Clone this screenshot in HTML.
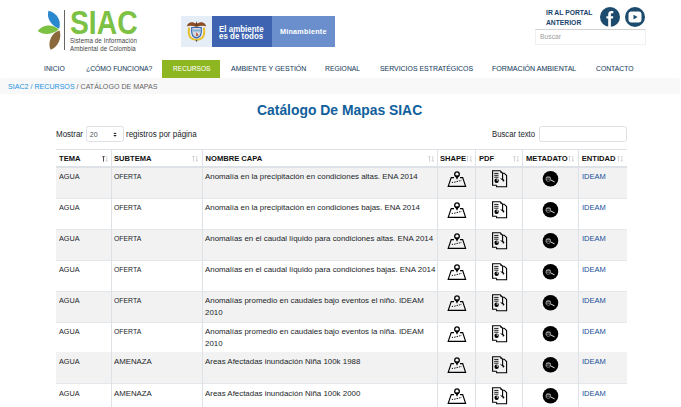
<!DOCTYPE html>
<html><head><meta charset="utf-8">
<style>
*{margin:0;padding:0;box-sizing:border-box}
html,body{width:681px;height:407px;overflow:hidden;background:#fff;font-family:"Liberation Sans",sans-serif}
.a{position:absolute;white-space:nowrap}
/* header */
.siac{left:70px;top:5px;font-size:32.5px;line-height:36px;font-weight:bold;color:#7cc143;transform:scaleX(0.87);transform-origin:0 0}
.sub{left:70px;font-size:6.5px;letter-spacing:0.12px;color:#3f3f3f;transform:scaleX(0.945);transform-origin:0 0}
.vline{left:64px;top:10px;width:1px;height:40px;background:#666}
.gov1{left:181px;top:16px;width:31px;height:31px;background:#e5edf7}
.gov2{left:212px;top:16px;width:60px;height:31px;background:#3e63b0}
.gov3{left:272px;top:16px;width:63px;height:31px;background:#6b8fcc}
.govt{color:#fff;font-weight:bold}
.portal{left:546px;font-size:6.75px;font-weight:bold;color:#17426a}
.sbox{left:535px;top:29px;width:111px;height:15.5px;border:1px solid #f0f0f0;border-top:1px solid #d2d2d2;background:#fff}
/* nav */
.nav{top:63.9px;font-size:7.75px;color:#183e60;-webkit-text-stroke:0.06px #183e60;transform:scaleX(0.876);transform-origin:0 0}
.navact{left:162px;top:60px;width:58px;height:18px;background:#8db621}
.crumb{left:0;top:78px;width:680px;height:16px;background:#f8f8f8;border-radius:2px}
.ctext{left:8px;top:83px;font-size:7.1px;color:#666}
.ctext b{font-weight:normal;color:#1e93e0}
/* title */
.title{left:257px;top:102px;font-size:13.9px;font-weight:bold;color:#11609c}
.lbl{font-size:7.9px;color:#212529}
.sel{left:86px;top:126px;width:38px;height:16px;border:1px solid #dde1e6;border-radius:2.5px;background:#fff}
.inp{left:539px;top:126px;width:88px;height:16px;border:1px solid #dde1e6;border-radius:2.5px;background:#fff}
/* table */
.tb{position:absolute;left:56px;top:149px;width:571px}
.hdr{position:absolute;left:0;top:0;width:571px;height:19px;border-top:1px solid #dee2e6;border-bottom:2px solid #dee2e6}
.row{position:absolute;left:0;width:571px;height:31px;border-bottom:1px solid #e3e6ea}
.g{background:#f2f2f2}
.vl{position:absolute;top:0;width:1px;background:#dee2e6}
.th{position:absolute;top:5.4px;font-size:7.6px;font-weight:bold;color:#111}
.td{position:absolute;top:6px;font-size:7.9px;color:#212529;line-height:11.5px}
.ent{color:#174f99}
.ic{position:absolute}
</style></head><body>

<!-- logo -->
<svg class="a" style="left:0;top:0" width="70" height="56" viewBox="0 0 70 56">
  <path d="M48.5 10.8 C46 19, 52 26, 59.2 28.8 C61.5 21, 57.5 13, 48.5 10.8Z" fill="#2a88cf"/>
  <path d="M37.8 31 C42 25, 52 23, 58.8 29.6 C52 35, 43 35.5, 37.8 31Z" fill="#7cc142"/>
  <path d="M59.6 30.4 C52 32, 47 42, 50.6 49.8 C58 47, 62 38, 59.6 30.4Z" fill="#8a6a3c"/>
</svg>
<div class="a vline"></div>
<div class="a siac">SIAC</div>
<div class="a sub" style="top:36.6px">Sistema de Información</div>
<div class="a sub" style="top:45.2px">Ambiental de Colombia</div>

<div class="a gov1"></div>
<svg class="a" style="left:181px;top:16px" width="31" height="31" viewBox="0 0 31 31">
  <path d="M5.8 10.2 C7 6 11 5 15.5 7.8 C20 5 24 6 25.2 10.2 C22.5 9.2 19 9.6 15.5 11 C12 9.6 8.5 9.2 5.8 10.2Z" fill="#8c4d26"/>
  <path d="M15.5 5 L16.6 9.5 L14.4 9.5Z" fill="#5a3a2a"/>
  <path d="M8.2 11.5 C7.3 16 8 20 10 22 C12 23.5 14 23.5 15.5 24.2 C17 23.5 19 23.5 21 22 C23 20 23.7 16 22.8 11.5" fill="none" stroke="#e6bf2a" stroke-width="2"/>
  <path d="M10.8 11.5 C10.4 15.5 10.8 19 12.5 20.5 C13.8 21.5 15 21.6 15.5 22 C16 21.6 17.2 21.5 18.5 20.5 C20.2 19 20.6 15.5 20.2 11.5 Z" fill="#d6d9e2" stroke="#3566ae" stroke-width="1.2"/>
  <path d="M11.5 13.5 H19.5 V15.5 H11.5Z" fill="#7fb0d8"/>
  <path d="M15.5 16 L17.5 19.5 L15 20Z" fill="#b8482a"/>
  <path d="M14.6 24 L16.4 24 L15.5 26.2Z" fill="#3a4a7a"/>
</svg>
<div class="a gov2"></div>
<div class="a gov3"></div>
<div class="a govt" style="left:219px;top:25.9px;font-size:8.6px;line-height:7.5px;transform:scaleX(0.925);transform-origin:0 0">El ambiente<br>es de todos</div>
<div class="a govt" style="left:280px;top:27.4px;font-size:7.2px;letter-spacing:0.25px">Minambiente</div>

<div class="a portal" style="top:9px">IR AL PORTAL</div>
<div class="a portal" style="top:19.2px">ANTERIOR</div>
<svg class="a" style="left:599px;top:6px" width="48" height="22" viewBox="0 0 48 22">
  <circle cx="11" cy="11" r="10" fill="#1c4b6d"/>
  <path d="M9.2 21 V12.6 H7.4 V10.2 H9.2 V8.4 C9.2 6 10.4 4.9 12.6 4.9 C13.3 4.9 14 5 14.3 5.1 V7.3 H13.2 C12.2 7.3 11.9 7.7 11.9 8.5 V10.2 H14.3 L14 12.6 H11.9 V21 Z" fill="#fff"/>
  <circle cx="36" cy="11" r="10" fill="#1c4b6d"/>
  <rect x="29.5" y="5.6" width="13" height="11" rx="3" fill="#fff"/>
  <path d="M34.5 8.8 L38.6 11.1 L34.5 13.4Z" fill="#1c4b6d"/>
</svg>
<div class="a sbox"></div>
<div class="a" style="left:540px;top:33px;font-size:6.75px;color:#a0a0a0">Buscar</div>

<!-- nav -->
<div class="a navact"></div>
<div class="a nav" style="left:44px">INICIO</div>
<div class="a nav" style="left:86px">¿CÓMO FUNCIONA?</div>
<div class="a nav" style="left:172.6px;transform:scaleX(0.852);color:#fff;-webkit-text-stroke:0.06px #fff">RECURSOS</div>
<div class="a nav" style="left:231px;transform:scaleX(0.9)">AMBIENTE Y GESTIÓN</div>
<div class="a nav" style="left:325px">REGIONAL</div>
<div class="a nav" style="left:380px;transform:scaleX(0.892)">SERVICIOS ESTRATÉGICOS</div>
<div class="a nav" style="left:492px;transform:scaleX(0.912)">FORMACIÓN AMBIENTAL</div>
<div class="a nav" style="left:596px">CONTACTO</div>

<div class="a crumb"></div>
<div class="a ctext"><b>SIAC2 / RECURSOS</b> / CATÁLOGO DE MAPAS</div>

<div class="a title">Catálogo De Mapas SIAC</div>
<div class="a lbl" style="left:56px;top:128.8px;font-size:8.3px;transform:scaleX(0.96);transform-origin:0 0">Mostrar</div>
<div class="a sel"></div>
<div class="a lbl" style="left:89.8px;top:130.6px;font-size:7px;color:#495057">20</div>
<svg class="a" style="left:112px;top:131px" width="6" height="7" viewBox="0 0 6 7"><path d="M1.2 3.1 L3 1.4 L4.8 3.1Z M1.2 4.1 L3 5.8 L4.8 4.1Z" fill="#222"/></svg>
<div class="a lbl" style="left:126px;top:128.8px;font-size:8.3px;transform:scaleX(0.965);transform-origin:0 0">registros por página</div>
<div class="a lbl" style="left:492px;top:128.8px;font-size:8.3px;transform:scaleX(0.933);transform-origin:0 0">Buscar texto</div>
<div class="a inp"></div>

<div class="tb">
<div class="hdr"></div>
<div class="th" style="left:3px">TEMA</div>
<div class="th" style="left:58px">SUBTEMA</div>
<div class="th" style="left:149.5px">NOMBRE CAPA</div>
<div class="th" style="left:384px">SHAPE</div>
<div class="th" style="left:423px">PDF</div>
<div class="th" style="left:470px">METADATO</div>
<div class="th" style="left:525.8px">ENTIDAD</div>
<svg class="ic" style="left:45.5px;top:7px" width="7" height="7" viewBox="0 0 7 7"><path d="M1.5 0.2 V5.6 M0.3 0.6 H2.7" stroke="#5a4a5a" stroke-width="1"/><path d="M4.8 0 V5.2 M3.6 4.9 H6" stroke="#d4d4d4" stroke-width="1"/></svg>
<svg class="ic" style="left:136.2px;top:7px" width="7" height="7" viewBox="0 0 7 7"><path d="M1.5 0.2 V5.6 M0.3 0.6 H2.7" stroke="#d4d4d4" stroke-width="1"/><path d="M4.8 0 V5.2 M3.6 4.9 H6" stroke="#d4d4d4" stroke-width="1"/></svg>
<svg class="ic" style="left:371.6px;top:7px" width="7" height="7" viewBox="0 0 7 7"><path d="M1.5 0.2 V5.6 M0.3 0.6 H2.7" stroke="#d4d4d4" stroke-width="1"/><path d="M4.8 0 V5.2 M3.6 4.9 H6" stroke="#d4d4d4" stroke-width="1"/></svg>
<svg class="ic" style="left:410.4px;top:7px" width="7" height="7" viewBox="0 0 7 7"><path d="M1.5 0.2 V5.6 M0.3 0.6 H2.7" stroke="#d4d4d4" stroke-width="1"/><path d="M4.8 0 V5.2 M3.6 4.9 H6" stroke="#d4d4d4" stroke-width="1"/></svg>
<svg class="ic" style="left:456.7px;top:7px" width="7" height="7" viewBox="0 0 7 7"><path d="M1.5 0.2 V5.6 M0.3 0.6 H2.7" stroke="#d4d4d4" stroke-width="1"/><path d="M4.8 0 V5.2 M3.6 4.9 H6" stroke="#d4d4d4" stroke-width="1"/></svg>
<svg class="ic" style="left:512.4px;top:7px" width="7" height="7" viewBox="0 0 7 7"><path d="M1.5 0.2 V5.6 M0.3 0.6 H2.7" stroke="#d4d4d4" stroke-width="1"/><path d="M4.8 0 V5.2 M3.6 4.9 H6" stroke="#d4d4d4" stroke-width="1"/></svg>
<svg class="ic" style="left:560.5px;top:7px" width="7" height="7" viewBox="0 0 7 7"><path d="M1.5 0.2 V5.6 M0.3 0.6 H2.7" stroke="#d4d4d4" stroke-width="1"/><path d="M4.8 0 V5.2 M3.6 4.9 H6" stroke="#d4d4d4" stroke-width="1"/></svg>
<div class="row g" style="top:19px"></div>
<div class="td" style="left:3px;top:22px;transform:scaleX(0.92);transform-origin:0 0">AGUA</div>
<div class="td" style="left:58px;top:22px;transform:scaleX(0.87);transform-origin:0 0">OFERTA</div>
<div class="td" style="left:149px;top:22px">Anomalía en la precipitación en condiciones altas. ENA 2014</div>
<div class="td ent" style="left:525.5px;top:22px;transform:scaleX(0.95);transform-origin:0 0">IDEAM</div>
<svg class="ic" style="left:390px;top:20px" width="22" height="20" viewBox="0 0 22 20"><path d="M8 8.6 H5.2 L2.2 17.3 H19.6 L16.7 8.6 H14" fill="none" stroke="#000" stroke-width="1.15" stroke-linejoin="miter"/><circle cx="11" cy="5.2" r="2.3" fill="none" stroke="#000" stroke-width="1.3"/><path d="M8.9 6.4 L11 10.7 L13.1 6.4Z" fill="#000"/><circle cx="6.4" cy="13.3" r="0.65" fill="#000"/><path d="M8.1 13.3 L15.7 11.3" stroke="#000" stroke-width="0.9" stroke-dasharray="1.6 0.9"/></svg>
<svg class="ic" style="left:432px;top:19px" width="22" height="22" viewBox="0 0 22 22"><path d="M8.6 17.3 V18.8 H18.6 V7.6 L16.2 5.2 H14.6" fill="none" stroke="#000" stroke-width="1.1"/><path d="M14.6 12.2 V5.2 L12.2 2.7 H4.6 V17.3 H8.6" fill="none" stroke="#000" stroke-width="1.1"/><path d="M12.2 2.7 L14.6 5.2 L12.6 5.0Z" fill="#000"/><path d="M6.2 5.4 H10.5 M6.2 7.3 H10.5 M6.2 9.2 H10.5" stroke="#000" stroke-width="0.9"/><circle cx="8.6" cy="12.7" r="2.2" fill="#000"/><circle cx="9.3" cy="12" r="0.8" fill="#fff"/><path d="M12.6 10.6 L15.6 12.2" stroke="#000" stroke-width="1"/><path d="M15 11 L16.6 12.6 L14.8 14Z" fill="#000"/></svg>
<svg class="ic" style="left:484px;top:19px" width="22" height="22" viewBox="0 0 22 22"><circle cx="10.5" cy="10.7" r="7.8" fill="#000"/><circle cx="8.3" cy="11" r="2.4" fill="none" stroke="#999" stroke-width="0.8"/><path d="M6 9.4 H10.6 M5.9 11.1 H10.8" stroke="#bbb" stroke-width="0.7"/><path d="M10.8 12 L14.6 13.9" stroke="#ddd" stroke-width="1"/></svg>
<div class="row" style="top:50px"></div>
<div class="td" style="left:3px;top:53px;transform:scaleX(0.92);transform-origin:0 0">AGUA</div>
<div class="td" style="left:58px;top:53px;transform:scaleX(0.87);transform-origin:0 0">OFERTA</div>
<div class="td" style="left:149px;top:53px">Anomalía en la precipitación en condiciones bajas. ENA 2014</div>
<div class="td ent" style="left:525.5px;top:53px;transform:scaleX(0.95);transform-origin:0 0">IDEAM</div>
<svg class="ic" style="left:390px;top:51px" width="22" height="20" viewBox="0 0 22 20"><path d="M8 8.6 H5.2 L2.2 17.3 H19.6 L16.7 8.6 H14" fill="none" stroke="#000" stroke-width="1.15" stroke-linejoin="miter"/><circle cx="11" cy="5.2" r="2.3" fill="none" stroke="#000" stroke-width="1.3"/><path d="M8.9 6.4 L11 10.7 L13.1 6.4Z" fill="#000"/><circle cx="6.4" cy="13.3" r="0.65" fill="#000"/><path d="M8.1 13.3 L15.7 11.3" stroke="#000" stroke-width="0.9" stroke-dasharray="1.6 0.9"/></svg>
<svg class="ic" style="left:432px;top:50px" width="22" height="22" viewBox="0 0 22 22"><path d="M8.6 17.3 V18.8 H18.6 V7.6 L16.2 5.2 H14.6" fill="none" stroke="#000" stroke-width="1.1"/><path d="M14.6 12.2 V5.2 L12.2 2.7 H4.6 V17.3 H8.6" fill="none" stroke="#000" stroke-width="1.1"/><path d="M12.2 2.7 L14.6 5.2 L12.6 5.0Z" fill="#000"/><path d="M6.2 5.4 H10.5 M6.2 7.3 H10.5 M6.2 9.2 H10.5" stroke="#000" stroke-width="0.9"/><circle cx="8.6" cy="12.7" r="2.2" fill="#000"/><circle cx="9.3" cy="12" r="0.8" fill="#fff"/><path d="M12.6 10.6 L15.6 12.2" stroke="#000" stroke-width="1"/><path d="M15 11 L16.6 12.6 L14.8 14Z" fill="#000"/></svg>
<svg class="ic" style="left:484px;top:50px" width="22" height="22" viewBox="0 0 22 22"><circle cx="10.5" cy="10.7" r="7.8" fill="#000"/><circle cx="8.3" cy="11" r="2.4" fill="none" stroke="#999" stroke-width="0.8"/><path d="M6 9.4 H10.6 M5.9 11.1 H10.8" stroke="#bbb" stroke-width="0.7"/><path d="M10.8 12 L14.6 13.9" stroke="#ddd" stroke-width="1"/></svg>
<div class="row g" style="top:81px"></div>
<div class="td" style="left:3px;top:84px;transform:scaleX(0.92);transform-origin:0 0">AGUA</div>
<div class="td" style="left:58px;top:84px;transform:scaleX(0.87);transform-origin:0 0">OFERTA</div>
<div class="td" style="left:149px;top:84px">Anomalías en el caudal líquido para condiciones altas. ENA 2014</div>
<div class="td ent" style="left:525.5px;top:84px;transform:scaleX(0.95);transform-origin:0 0">IDEAM</div>
<svg class="ic" style="left:390px;top:82px" width="22" height="20" viewBox="0 0 22 20"><path d="M8 8.6 H5.2 L2.2 17.3 H19.6 L16.7 8.6 H14" fill="none" stroke="#000" stroke-width="1.15" stroke-linejoin="miter"/><circle cx="11" cy="5.2" r="2.3" fill="none" stroke="#000" stroke-width="1.3"/><path d="M8.9 6.4 L11 10.7 L13.1 6.4Z" fill="#000"/><circle cx="6.4" cy="13.3" r="0.65" fill="#000"/><path d="M8.1 13.3 L15.7 11.3" stroke="#000" stroke-width="0.9" stroke-dasharray="1.6 0.9"/></svg>
<svg class="ic" style="left:432px;top:81px" width="22" height="22" viewBox="0 0 22 22"><path d="M8.6 17.3 V18.8 H18.6 V7.6 L16.2 5.2 H14.6" fill="none" stroke="#000" stroke-width="1.1"/><path d="M14.6 12.2 V5.2 L12.2 2.7 H4.6 V17.3 H8.6" fill="none" stroke="#000" stroke-width="1.1"/><path d="M12.2 2.7 L14.6 5.2 L12.6 5.0Z" fill="#000"/><path d="M6.2 5.4 H10.5 M6.2 7.3 H10.5 M6.2 9.2 H10.5" stroke="#000" stroke-width="0.9"/><circle cx="8.6" cy="12.7" r="2.2" fill="#000"/><circle cx="9.3" cy="12" r="0.8" fill="#fff"/><path d="M12.6 10.6 L15.6 12.2" stroke="#000" stroke-width="1"/><path d="M15 11 L16.6 12.6 L14.8 14Z" fill="#000"/></svg>
<svg class="ic" style="left:484px;top:81px" width="22" height="22" viewBox="0 0 22 22"><circle cx="10.5" cy="10.7" r="7.8" fill="#000"/><circle cx="8.3" cy="11" r="2.4" fill="none" stroke="#999" stroke-width="0.8"/><path d="M6 9.4 H10.6 M5.9 11.1 H10.8" stroke="#bbb" stroke-width="0.7"/><path d="M10.8 12 L14.6 13.9" stroke="#ddd" stroke-width="1"/></svg>
<div class="row" style="top:112px"></div>
<div class="td" style="left:3px;top:115px;transform:scaleX(0.92);transform-origin:0 0">AGUA</div>
<div class="td" style="left:58px;top:115px;transform:scaleX(0.87);transform-origin:0 0">OFERTA</div>
<div class="td" style="left:149px;top:115px">Anomalías en el caudal líquido para condiciones bajas. ENA 2014</div>
<div class="td ent" style="left:525.5px;top:115px;transform:scaleX(0.95);transform-origin:0 0">IDEAM</div>
<svg class="ic" style="left:390px;top:113px" width="22" height="20" viewBox="0 0 22 20"><path d="M8 8.6 H5.2 L2.2 17.3 H19.6 L16.7 8.6 H14" fill="none" stroke="#000" stroke-width="1.15" stroke-linejoin="miter"/><circle cx="11" cy="5.2" r="2.3" fill="none" stroke="#000" stroke-width="1.3"/><path d="M8.9 6.4 L11 10.7 L13.1 6.4Z" fill="#000"/><circle cx="6.4" cy="13.3" r="0.65" fill="#000"/><path d="M8.1 13.3 L15.7 11.3" stroke="#000" stroke-width="0.9" stroke-dasharray="1.6 0.9"/></svg>
<svg class="ic" style="left:432px;top:112px" width="22" height="22" viewBox="0 0 22 22"><path d="M8.6 17.3 V18.8 H18.6 V7.6 L16.2 5.2 H14.6" fill="none" stroke="#000" stroke-width="1.1"/><path d="M14.6 12.2 V5.2 L12.2 2.7 H4.6 V17.3 H8.6" fill="none" stroke="#000" stroke-width="1.1"/><path d="M12.2 2.7 L14.6 5.2 L12.6 5.0Z" fill="#000"/><path d="M6.2 5.4 H10.5 M6.2 7.3 H10.5 M6.2 9.2 H10.5" stroke="#000" stroke-width="0.9"/><circle cx="8.6" cy="12.7" r="2.2" fill="#000"/><circle cx="9.3" cy="12" r="0.8" fill="#fff"/><path d="M12.6 10.6 L15.6 12.2" stroke="#000" stroke-width="1"/><path d="M15 11 L16.6 12.6 L14.8 14Z" fill="#000"/></svg>
<svg class="ic" style="left:484px;top:112px" width="22" height="22" viewBox="0 0 22 22"><circle cx="10.5" cy="10.7" r="7.8" fill="#000"/><circle cx="8.3" cy="11" r="2.4" fill="none" stroke="#999" stroke-width="0.8"/><path d="M6 9.4 H10.6 M5.9 11.1 H10.8" stroke="#bbb" stroke-width="0.7"/><path d="M10.8 12 L14.6 13.9" stroke="#ddd" stroke-width="1"/></svg>
<div class="row g" style="top:143px"></div>
<div class="td" style="left:3px;top:146px;transform:scaleX(0.92);transform-origin:0 0">AGUA</div>
<div class="td" style="left:58px;top:146px;transform:scaleX(0.87);transform-origin:0 0">OFERTA</div>
<div class="td" style="left:149px;top:146px">Anomalías promedio en caudales bajo eventos el niño. IDEAM<br>2010</div>
<div class="td ent" style="left:525.5px;top:146px;transform:scaleX(0.95);transform-origin:0 0">IDEAM</div>
<svg class="ic" style="left:390px;top:144px" width="22" height="20" viewBox="0 0 22 20"><path d="M8 8.6 H5.2 L2.2 17.3 H19.6 L16.7 8.6 H14" fill="none" stroke="#000" stroke-width="1.15" stroke-linejoin="miter"/><circle cx="11" cy="5.2" r="2.3" fill="none" stroke="#000" stroke-width="1.3"/><path d="M8.9 6.4 L11 10.7 L13.1 6.4Z" fill="#000"/><circle cx="6.4" cy="13.3" r="0.65" fill="#000"/><path d="M8.1 13.3 L15.7 11.3" stroke="#000" stroke-width="0.9" stroke-dasharray="1.6 0.9"/></svg>
<svg class="ic" style="left:432px;top:143px" width="22" height="22" viewBox="0 0 22 22"><path d="M8.6 17.3 V18.8 H18.6 V7.6 L16.2 5.2 H14.6" fill="none" stroke="#000" stroke-width="1.1"/><path d="M14.6 12.2 V5.2 L12.2 2.7 H4.6 V17.3 H8.6" fill="none" stroke="#000" stroke-width="1.1"/><path d="M12.2 2.7 L14.6 5.2 L12.6 5.0Z" fill="#000"/><path d="M6.2 5.4 H10.5 M6.2 7.3 H10.5 M6.2 9.2 H10.5" stroke="#000" stroke-width="0.9"/><circle cx="8.6" cy="12.7" r="2.2" fill="#000"/><circle cx="9.3" cy="12" r="0.8" fill="#fff"/><path d="M12.6 10.6 L15.6 12.2" stroke="#000" stroke-width="1"/><path d="M15 11 L16.6 12.6 L14.8 14Z" fill="#000"/></svg>
<svg class="ic" style="left:484px;top:143px" width="22" height="22" viewBox="0 0 22 22"><circle cx="10.5" cy="10.7" r="7.8" fill="#000"/><circle cx="8.3" cy="11" r="2.4" fill="none" stroke="#999" stroke-width="0.8"/><path d="M6 9.4 H10.6 M5.9 11.1 H10.8" stroke="#bbb" stroke-width="0.7"/><path d="M10.8 12 L14.6 13.9" stroke="#ddd" stroke-width="1"/></svg>
<div class="row" style="top:174px"></div>
<div class="td" style="left:3px;top:177px;transform:scaleX(0.92);transform-origin:0 0">AGUA</div>
<div class="td" style="left:58px;top:177px;transform:scaleX(0.87);transform-origin:0 0">OFERTA</div>
<div class="td" style="left:149px;top:177px">Anomalías promedio en caudales bajo eventos la niña. IDEAM<br>2010</div>
<div class="td ent" style="left:525.5px;top:177px;transform:scaleX(0.95);transform-origin:0 0">IDEAM</div>
<svg class="ic" style="left:390px;top:175px" width="22" height="20" viewBox="0 0 22 20"><path d="M8 8.6 H5.2 L2.2 17.3 H19.6 L16.7 8.6 H14" fill="none" stroke="#000" stroke-width="1.15" stroke-linejoin="miter"/><circle cx="11" cy="5.2" r="2.3" fill="none" stroke="#000" stroke-width="1.3"/><path d="M8.9 6.4 L11 10.7 L13.1 6.4Z" fill="#000"/><circle cx="6.4" cy="13.3" r="0.65" fill="#000"/><path d="M8.1 13.3 L15.7 11.3" stroke="#000" stroke-width="0.9" stroke-dasharray="1.6 0.9"/></svg>
<svg class="ic" style="left:432px;top:174px" width="22" height="22" viewBox="0 0 22 22"><path d="M8.6 17.3 V18.8 H18.6 V7.6 L16.2 5.2 H14.6" fill="none" stroke="#000" stroke-width="1.1"/><path d="M14.6 12.2 V5.2 L12.2 2.7 H4.6 V17.3 H8.6" fill="none" stroke="#000" stroke-width="1.1"/><path d="M12.2 2.7 L14.6 5.2 L12.6 5.0Z" fill="#000"/><path d="M6.2 5.4 H10.5 M6.2 7.3 H10.5 M6.2 9.2 H10.5" stroke="#000" stroke-width="0.9"/><circle cx="8.6" cy="12.7" r="2.2" fill="#000"/><circle cx="9.3" cy="12" r="0.8" fill="#fff"/><path d="M12.6 10.6 L15.6 12.2" stroke="#000" stroke-width="1"/><path d="M15 11 L16.6 12.6 L14.8 14Z" fill="#000"/></svg>
<svg class="ic" style="left:484px;top:174px" width="22" height="22" viewBox="0 0 22 22"><circle cx="10.5" cy="10.7" r="7.8" fill="#000"/><circle cx="8.3" cy="11" r="2.4" fill="none" stroke="#999" stroke-width="0.8"/><path d="M6 9.4 H10.6 M5.9 11.1 H10.8" stroke="#bbb" stroke-width="0.7"/><path d="M10.8 12 L14.6 13.9" stroke="#ddd" stroke-width="1"/></svg>
<div class="row g" style="top:203px;height:32px"></div>
<div class="td" style="left:3px;top:207px;transform:scaleX(0.92);transform-origin:0 0">AGUA</div>
<div class="td" style="left:58px;top:207px;transform:scaleX(0.99);transform-origin:0 0">AMENAZA</div>
<div class="td" style="left:149px;top:207px">Areas Afectadas inundación Niña 100k 1988</div>
<div class="td ent" style="left:525.5px;top:207px;transform:scaleX(0.95);transform-origin:0 0">IDEAM</div>
<svg class="ic" style="left:390px;top:206px" width="22" height="20" viewBox="0 0 22 20"><path d="M8 8.6 H5.2 L2.2 17.3 H19.6 L16.7 8.6 H14" fill="none" stroke="#000" stroke-width="1.15" stroke-linejoin="miter"/><circle cx="11" cy="5.2" r="2.3" fill="none" stroke="#000" stroke-width="1.3"/><path d="M8.9 6.4 L11 10.7 L13.1 6.4Z" fill="#000"/><circle cx="6.4" cy="13.3" r="0.65" fill="#000"/><path d="M8.1 13.3 L15.7 11.3" stroke="#000" stroke-width="0.9" stroke-dasharray="1.6 0.9"/></svg>
<svg class="ic" style="left:432px;top:205px" width="22" height="22" viewBox="0 0 22 22"><path d="M8.6 17.3 V18.8 H18.6 V7.6 L16.2 5.2 H14.6" fill="none" stroke="#000" stroke-width="1.1"/><path d="M14.6 12.2 V5.2 L12.2 2.7 H4.6 V17.3 H8.6" fill="none" stroke="#000" stroke-width="1.1"/><path d="M12.2 2.7 L14.6 5.2 L12.6 5.0Z" fill="#000"/><path d="M6.2 5.4 H10.5 M6.2 7.3 H10.5 M6.2 9.2 H10.5" stroke="#000" stroke-width="0.9"/><circle cx="8.6" cy="12.7" r="2.2" fill="#000"/><circle cx="9.3" cy="12" r="0.8" fill="#fff"/><path d="M12.6 10.6 L15.6 12.2" stroke="#000" stroke-width="1"/><path d="M15 11 L16.6 12.6 L14.8 14Z" fill="#000"/></svg>
<svg class="ic" style="left:484px;top:205px" width="22" height="22" viewBox="0 0 22 22"><circle cx="10.5" cy="10.7" r="7.8" fill="#000"/><circle cx="8.3" cy="11" r="2.4" fill="none" stroke="#999" stroke-width="0.8"/><path d="M6 9.4 H10.6 M5.9 11.1 H10.8" stroke="#bbb" stroke-width="0.7"/><path d="M10.8 12 L14.6 13.9" stroke="#ddd" stroke-width="1"/></svg>
<div class="row" style="top:235px"></div>
<div class="td" style="left:3px;top:239px;transform:scaleX(0.92);transform-origin:0 0">AGUA</div>
<div class="td" style="left:58px;top:239px;transform:scaleX(0.99);transform-origin:0 0">AMENAZA</div>
<div class="td" style="left:149px;top:239px">Areas Afectadas inundación Niña 100k 2000</div>
<div class="td ent" style="left:525.5px;top:239px;transform:scaleX(0.95);transform-origin:0 0">IDEAM</div>
<svg class="ic" style="left:390px;top:237px" width="22" height="20" viewBox="0 0 22 20"><path d="M8 8.6 H5.2 L2.2 17.3 H19.6 L16.7 8.6 H14" fill="none" stroke="#000" stroke-width="1.15" stroke-linejoin="miter"/><circle cx="11" cy="5.2" r="2.3" fill="none" stroke="#000" stroke-width="1.3"/><path d="M8.9 6.4 L11 10.7 L13.1 6.4Z" fill="#000"/><circle cx="6.4" cy="13.3" r="0.65" fill="#000"/><path d="M8.1 13.3 L15.7 11.3" stroke="#000" stroke-width="0.9" stroke-dasharray="1.6 0.9"/></svg>
<svg class="ic" style="left:432px;top:236px" width="22" height="22" viewBox="0 0 22 22"><path d="M8.6 17.3 V18.8 H18.6 V7.6 L16.2 5.2 H14.6" fill="none" stroke="#000" stroke-width="1.1"/><path d="M14.6 12.2 V5.2 L12.2 2.7 H4.6 V17.3 H8.6" fill="none" stroke="#000" stroke-width="1.1"/><path d="M12.2 2.7 L14.6 5.2 L12.6 5.0Z" fill="#000"/><path d="M6.2 5.4 H10.5 M6.2 7.3 H10.5 M6.2 9.2 H10.5" stroke="#000" stroke-width="0.9"/><circle cx="8.6" cy="12.7" r="2.2" fill="#000"/><circle cx="9.3" cy="12" r="0.8" fill="#fff"/><path d="M12.6 10.6 L15.6 12.2" stroke="#000" stroke-width="1"/><path d="M15 11 L16.6 12.6 L14.8 14Z" fill="#000"/></svg>
<svg class="ic" style="left:484px;top:236px" width="22" height="22" viewBox="0 0 22 22"><circle cx="10.5" cy="10.7" r="7.8" fill="#000"/><circle cx="8.3" cy="11" r="2.4" fill="none" stroke="#999" stroke-width="0.8"/><path d="M6 9.4 H10.6 M5.9 11.1 H10.8" stroke="#bbb" stroke-width="0.7"/><path d="M10.8 12 L14.6 13.9" stroke="#ddd" stroke-width="1"/></svg>
<div class="vl" style="left:55px;height:267px"></div>
<div class="vl" style="left:146px;height:267px"></div>
<div class="vl" style="left:381px;height:267px"></div>
<div class="vl" style="left:419px;height:267px"></div>
<div class="vl" style="left:466px;height:267px"></div>
<div class="vl" style="left:522px;height:267px"></div>
</div>
</body></html>
